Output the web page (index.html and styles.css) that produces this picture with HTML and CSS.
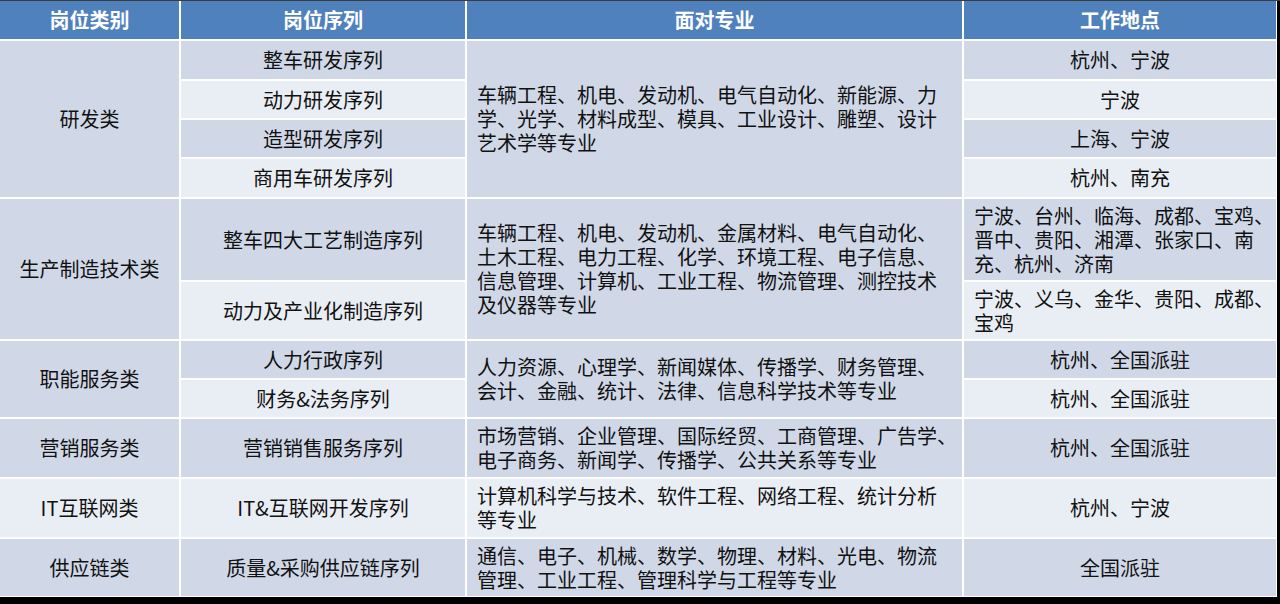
FILE: index.html
```html
<!DOCTYPE html>
<html lang="zh-CN">
<head>
<meta charset="utf-8">
<title>岗位类别</title>
<link rel="stylesheet" href="styles.css">
</head>
<body>
<div class="page">
  <div class="grid">
    <div class="cell head">岗位类别</div>
    <div class="cell head">岗位序列</div>
    <div class="cell head">面对专业</div>
    <div class="cell head">工作地点</div>

    <div class="cell dark c1 span4">研发类</div>
    <div class="cell dark c2">整车研发序列</div>
    <div class="cell dark c3 span4">车辆工程、机电、发动机、电气自动化、新能源、力<br>学、光学、材料成型、模具、工业设计、雕塑、设计<br>艺术学等专业</div>
    <div class="cell dark c4">杭州、宁波</div>
    <div class="cell light c2">动力研发序列</div>
    <div class="cell light c4">宁波</div>
    <div class="cell dark c2">造型研发序列</div>
    <div class="cell dark c4">上海、宁波</div>
    <div class="cell light c2">商用车研发序列</div>
    <div class="cell light c4">杭州、南充</div>

    <div class="cell dark c1 span2">生产制造技术类</div>
    <div class="cell dark c2">整车四大工艺制造序列</div>
    <div class="cell dark c3 span2">车辆工程、机电、发动机、金属材料、电气自动化、<br>土木工程、电力工程、化学、环境工程、电子信息、<br>信息管理、计算机、工业工程、物流管理、测控技术<br>及仪器等专业</div>
    <div class="cell dark c4 left">宁波、台州、临海、成都、宝鸡、<br>晋中、贵阳、湘潭、张家口、南<br>充、杭州、济南</div>
    <div class="cell light c2">动力及产业化制造序列</div>
    <div class="cell light c4 left">宁波、义乌、金华、贵阳、成都、<br>宝鸡</div>

    <div class="cell dark c1 span2">职能服务类</div>
    <div class="cell dark c2">人力行政序列</div>
    <div class="cell dark c3 span2">人力资源、心理学、新闻媒体、传播学、财务管理、<br>会计、金融、统计、法律、信息科学技术等专业</div>
    <div class="cell dark c4">杭州、全国派驻</div>
    <div class="cell light c2">财务&amp;法务序列</div>
    <div class="cell light c4">杭州、全国派驻</div>

    <div class="cell dark c1">营销服务类</div>
    <div class="cell dark c2">营销销售服务序列</div>
    <div class="cell dark c3">市场营销、企业管理、国际经贸、工商管理、广告学、<br>电子商务、新闻学、传播学、公共关系等专业</div>
    <div class="cell dark c4">杭州、全国派驻</div>

    <div class="cell light c1">IT互联网类</div>
    <div class="cell light c2">IT&amp;互联网开发序列</div>
    <div class="cell light c3">计算机科学与技术、软件工程、网络工程、统计分析<br>等专业</div>
    <div class="cell light c4">杭州、宁波</div>

    <div class="cell dark c1">供应链类</div>
    <div class="cell dark c2">质量&amp;采购供应链序列</div>
    <div class="cell dark c3">通信、电子、机械、数学、物理、材料、光电、物流<br>管理、工业工程、管理科学与工程等专业</div>
    <div class="cell dark c4">全国派驻</div>
  </div>
</div>
</body>
</html>
```

FILE: styles.css
```css
html, body {
  margin: 0;
  padding: 0;
  background: #000;
}

.page {
  width: 1280px;
  height: 604px;
  background: #000;
  border-top: 1px solid #3c3c3c;
  box-sizing: border-box;
}

.grid {
  width: 1276px;
  display: grid;
  grid-template-columns: 179px 284px 495px 312px;
  grid-template-rows: 38px 38px 37px 37px 38px 81px 57px 37px 37px 58px 58px 57px;
  gap: 2px;
  background: #ffffff;
  padding: 0 1px 1px 0;
  font-family: "Microsoft YaHei", "Noto Sans CJK SC", "Noto Sans", sans-serif;
  font-size: 20px;
  line-height: 24px;
  color: #111;
}

.cell {
  display: flex;
  align-items: center;
  justify-content: center;
  text-align: center;
  white-space: nowrap;
  overflow: hidden;
}

.head {
  background: #4f81bd;
  color: #ffffff;
  font-weight: bold;
}

.dark { background: #d0d8e8; }
.light { background: #e9edf4; }

.c1 { grid-column: 1; }
.c2 { grid-column: 2; }
.c3 {
  grid-column: 3;
  justify-content: flex-start;
  text-align: left;
  padding-left: 10px;
}
.c4 { grid-column: 4; }

.c4.left {
  justify-content: flex-start;
  text-align: left;
  padding-left: 10px;
}

.span4 { grid-row: span 4; }
.span2 { grid-row: span 2; }
```
